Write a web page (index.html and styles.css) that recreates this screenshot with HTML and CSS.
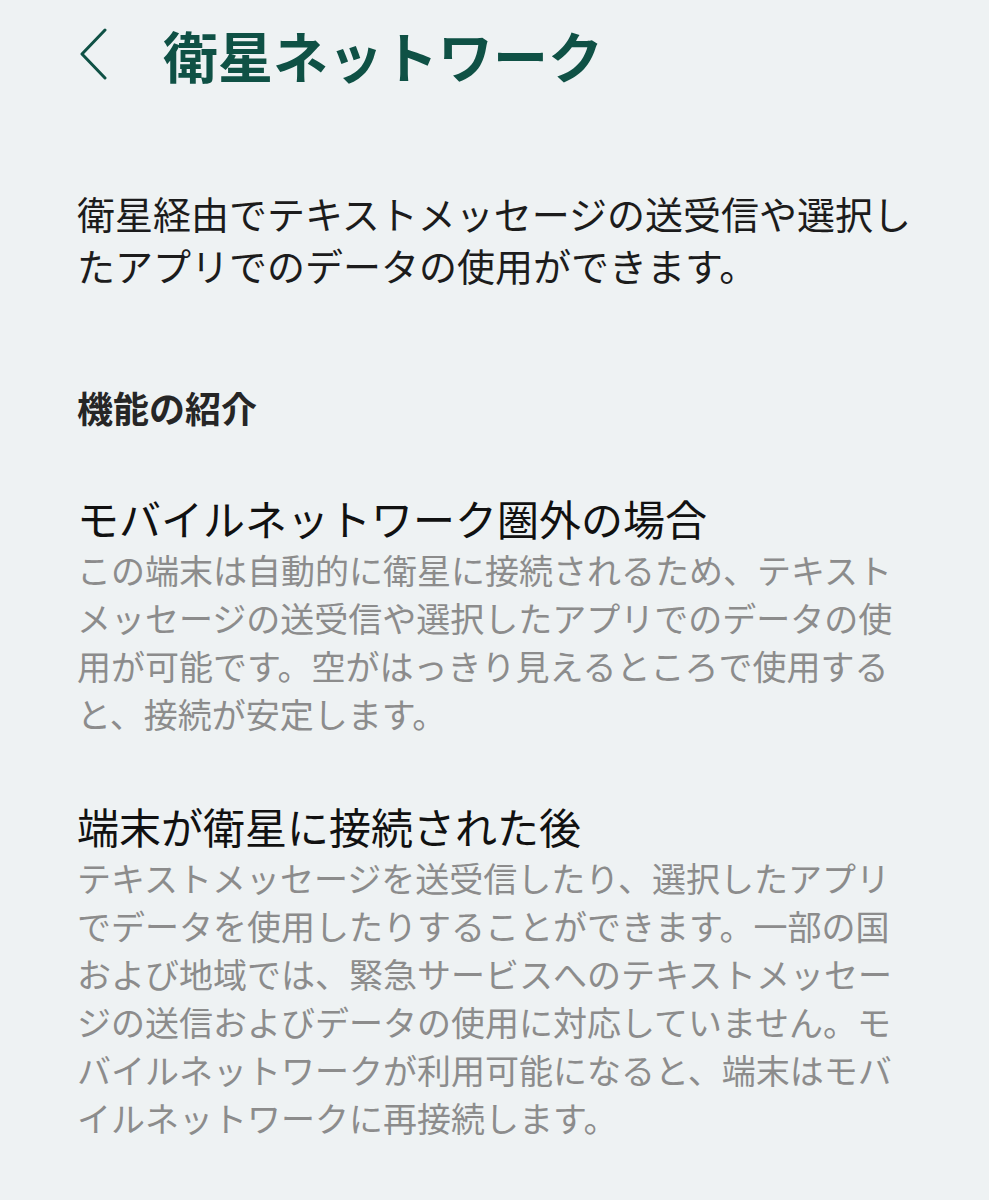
FILE: index.html
```html
<!DOCTYPE html>
<html lang="ja">
<head>
    <meta charset="UTF-8">
    <meta name="viewport" content="width=device-width, initial-scale=1.0">
    <title>衛星ネットワーク</title>
    <link rel="stylesheet" href="styles.css">
</head>
<body>
    <div class="page">
        <header class="top-bar">
            <button class="back" aria-label="戻る">
                <svg width="28" height="54" viewBox="0 0 28 54">
                    <path d="M26 3 L3 27 L26 51" fill="none" stroke="#0f5145" stroke-width="3" stroke-linecap="round" stroke-linejoin="round"/>
                </svg>
            </button>
            <h1>衛星ネットワーク</h1>
        </header>

        <p class="intro">衛星経由でテキストメッセージの送受信や選択したアプリでのデータの使用ができます。</p>

        <h2 class="section-title">機能の紹介</h2>

        <div class="feature">
            <h3>モバイルネットワーク圏外の場合</h3>
            <p>この端末は自動的に衛星に接続されるため、テキストメッセージの送受信や選択したアプリでのデータの使用が可能です。空がはっきり見えるところで使用すると、接続が安定します。</p>
        </div>

        <div class="feature">
            <h3>端末が衛星に接続された後</h3>
            <p>テキストメッセージを送受信したり、選択したアプリでデータを使用したりすることができます。一部の国および地域では、緊急サービスへのテキストメッセージの送信およびデータの使用に対応していません。モバイルネットワークが利用可能になると、端末はモバイルネットワークに再接続します。</p>
        </div>
    </div>
</body>
</html>
```

FILE: styles.css
```css
body {
    margin: 0;
    background-color: #eef2f3;
    font-family: "Noto Sans CJK JP", "Noto Sans", sans-serif;
    color: #1c1c1c;
}
.page {
    padding: 0 0 0 77px;
    max-width: 840px;
}
.top-bar {
    display: flex;
    align-items: center;
    height: 108px;
}
.back {
    display: flex;
    align-items: center;
    background: none;
    border: none;
    padding: 0;
    margin-left: 2px;
    cursor: pointer;
}
.top-bar h1 {
    margin: 0 0 0 56px;
    font-size: 55px;
    font-weight: 700;
    line-height: 1;
    color: #0f5145;
}
.intro {
    margin: 79px 0 0;
    font-size: 38px;
    line-height: 52px;
}
.section-title {
    margin: 92px 0 0;
    font-size: 36px;
    font-weight: 700;
    line-height: 48px;
    color: #262626;
}
.feature {
    margin-top: 61px;
}
.feature + .feature {
    margin-top: 62px;
}
.feature h3 {
    margin: 0 0 2px;
    font-size: 42px;
    font-weight: 400;
    line-height: 52px;
    color: #111;
}
.feature p {
    margin: 0;
    font-size: 34px;
    line-height: 48px;
    color: #8c8c8c;
}
```
